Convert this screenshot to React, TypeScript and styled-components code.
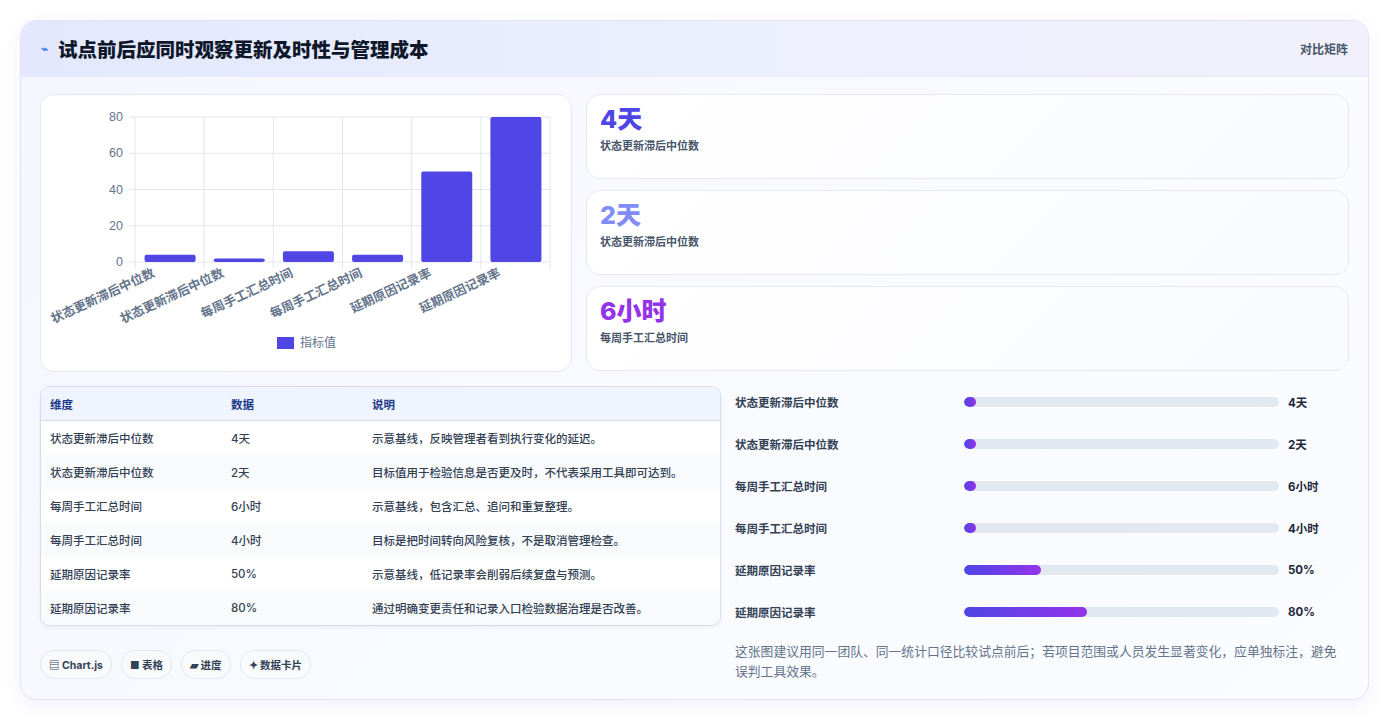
import { FC } from 'react';
import styled, { createGlobalStyle } from 'styled-components';

const GlobalStyle = createGlobalStyle`
    body {
        margin: 0;
        background: #ffffff;
        font-family: 'Inter', 'Noto Sans CJK SC', sans-serif;
    }
`;

const Page = styled.div`
    padding: 20px;
`;

const Panel = styled.section`
    width: 1349px;
    height: 680px;
    box-sizing: border-box;
    border: 1px solid #dfe3f5;
    border-radius: 16px;
    background: linear-gradient(135deg, #f4f6ff 0%, #fafbff 60%, #fbfcff 100%);
    box-shadow: 0 6px 18px rgba(79, 70, 229, 0.08);
    overflow: hidden;
`;

const Header = styled.header`
    height: 55px;
    display: flex;
    align-items: center;
    justify-content: space-between;
    padding: 0 20px;
    background: linear-gradient(90deg, #e3e8fe 0%, #eef0fd 60%, #f1f0fc 100%);
    border-bottom: 1px solid #e6e9f7;
`;

const Title = styled.h1`
    margin: 0;
    display: flex;
    align-items: center;
    gap: 10px;
    font-size: 19.5px;
    font-weight: 800;
    color: #0f172a;
`;

const TitleIcon = styled.span`
    font-size: 12px;
    color: #3b82f6;
`;

const HeaderTag = styled.span`
    font-size: 12px;
    font-weight: 600;
    color: #475569;
`;

const Body = styled.div`
    padding: 17px 19px 0 19px;
    display: flex;
    flex-direction: column;
    gap: 14px;
`;

const TopGrid = styled.div`
    display: grid;
    grid-template-columns: 532px 1fr;
    gap: 14px;
`;

const Card = styled.div`
    background: #ffffff;
    border: 1px solid #e5e8f3;
    border-radius: 14px;
    box-sizing: border-box;
`;

const ChartCard = styled(Card)`
    height: 278px;
`;

const Metrics = styled.div`
    display: flex;
    flex-direction: column;
    gap: 11px;
`;

const MetricCard = styled(Card)`
    height: 85px;
    padding: 8px 13px;
    background: linear-gradient(135deg, #ffffff, #fafbff);
`;

const MetricValue = styled.div<{ $color: string }>`
    font-size: 25px;
    font-weight: 800;
    line-height: 32px;
    color: ${p => p.$color};
`;

const MetricLabel = styled.div`
    font-size: 11px;
    font-weight: 600;
    color: #475569;
    margin-top: 2px;
`;

const BottomGrid = styled.div`
    display: grid;
    grid-template-columns: 681px 1fr;
    gap: 14px;
`;

const LeftCol = styled.div`
    display: flex;
    flex-direction: column;
    gap: 24px;
`;

const TableWrap = styled.div`
    border: 1px solid #d6dcec;
    border-radius: 10px;
    overflow: hidden;
    background: #ffffff;
    box-shadow: 0 2px 4px rgba(15, 23, 42, 0.05);
`;

const Table = styled.table`
    width: 100%;
    table-layout: fixed;
    border-collapse: collapse;
    font-size: 11.5px;
`;

const Th = styled.th<{ $w?: number }>`
    text-align: left;
    font-weight: 700;
    color: #1e3a8a;
    background: #eff4ff;
    height: 33px;
    padding: 0 9px;
    border-bottom: 1px solid #d6dcec;
    width: ${p => (p.$w ? `${p.$w}px` : 'auto')};
`;

const Tr = styled.tr<{ $alt: boolean }>`
    background: ${p => (p.$alt ? '#f8fafc' : '#ffffff')};
    & + & td {
        border-top: 1px solid #e2e8f0;
    }
`;

const Td = styled.td`
    height: 34px;
    padding: 0 9px;
    color: #334155;
    font-weight: 500;
    white-space: nowrap;
`;

const Chips = styled.div`
    display: flex;
    gap: 9px;
`;

const Chip = styled.span`
    height: 27px;
    display: inline-flex;
    align-items: center;
    gap: 3px;
    padding: 0 8px;
    border: 1px solid #e2e8f0;
    border-radius: 14px;
    background: #f8fafc;
    font-size: 10.5px;
    font-weight: 700;
    color: #334155;
`;

const RightCol = styled.div`
    display: flex;
    flex-direction: column;
`;

const ProgressList = styled.div`
    display: flex;
    flex-direction: column;
    padding-top: 6px;
    gap: 22px;
`;

const ProgressRow = styled.div`
    display: grid;
    grid-template-columns: 220px 315px 1fr;
    align-items: center;
    gap: 9px;
    height: 20px;
`;

const ProgressLabel = styled.span`
    font-size: 11.5px;
    font-weight: 700;
    color: #334155;
`;

const Track = styled.div`
    height: 10px;
    border-radius: 5px;
    background: #e2e8f0;
    overflow: hidden;
`;

const Fill = styled.div`
    height: 100%;
    min-width: 12px;
    border-radius: 5px;
    background: linear-gradient(90deg, #4f46e5, #9333ea);
`;

const ProgressValue = styled.span`
    font-size: 11.5px;
    font-weight: 700;
    color: #1e293b;
`;

const Note = styled.p`
    margin: 20px 0 0 0;
    padding-right: 4px;
    font-size: 12.8px;
    line-height: 20px;
    color: #64748b;
`;

const bars = [4, 2, 6, 4, 50, 80];
const labels = ['状态更新滞后中位数', '状态更新滞后中位数', '每周手工汇总时间', '每周手工汇总时间', '延期原因记录率', '延期原因记录率'];

const BarChart: FC = () => {
    const left = 94, right = 509, top = 22, bottom = 167;
    const cw = (right - left) / 6;
    const y = (v: number) => bottom - (v / 80) * (bottom - top);
    return (
        <svg width="531" height="277" viewBox="0 0 531 277" fontFamily="'Liberation Sans', 'Noto Sans CJK SC', sans-serif">
            {[0, 20, 40, 60, 80].map(t => (
                <g key={t}>
                    <line x1={left - 6} x2={right} y1={y(t)} y2={y(t)} stroke="#e2e6ee" />
                    <text x={left - 12} y={y(t) + 4} textAnchor="end" fontSize="12.5" fill="#64748b">{t}</text>
                </g>
            ))}
            {Array.from({ length: 7 }).map((_, i) => (
                <line key={i} x1={left + i * cw} x2={left + i * cw} y1={top} y2={bottom + 7} stroke="#e2e6ee" />
            ))}
            {bars.map((v, i) => {
                const cx = left + cw * i + cw / 2;
                return (
                    <g key={i}>
                        <rect x={cx - 25} y={y(v)} width={51} height={bottom - y(v)} rx={2} fill="#4f46e5" />
                        <text
                            x={cx - 14}
                            y={181}
                            textAnchor="end"
                            fontSize="12.5"
                            fontWeight="600"
                            fill="#64748b"
                            transform={`rotate(-25 ${cx - 14} 181)`}
                        >
                            {labels[i]}
                        </text>
                    </g>
                );
            })}
            <rect x={236} y={242} width={17} height={12} fill="#4f46e5" />
            <text x={259} y={252} fontSize="12" fill="#64748b">指标值</text>
        </svg>
    );
};

const metrics = [
    { value: '4天', label: '状态更新滞后中位数', color: '#4f46e5' },
    { value: '2天', label: '状态更新滞后中位数', color: '#818cf8' },
    { value: '6小时', label: '每周手工汇总时间', color: '#9333ea' },
];

const rows = [
    ['状态更新滞后中位数', '4天', '示意基线，反映管理者看到执行变化的延迟。'],
    ['状态更新滞后中位数', '2天', '目标值用于检验信息是否更及时，不代表采用工具即可达到。'],
    ['每周手工汇总时间', '6小时', '示意基线，包含汇总、追问和重复整理。'],
    ['每周手工汇总时间', '4小时', '目标是把时间转向风险复核，不是取消管理检查。'],
    ['延期原因记录率', '50%', '示意基线，低记录率会削弱后续复盘与预测。'],
    ['延期原因记录率', '80%', '通过明确变更责任和记录入口检验数据治理是否改善。'],
];

const progress = [
    { label: '状态更新滞后中位数', v: 4, text: '4天' },
    { label: '状态更新滞后中位数', v: 2, text: '2天' },
    { label: '每周手工汇总时间', v: 6, text: '6小时' },
    { label: '每周手工汇总时间', v: 4, text: '4小时' },
    { label: '延期原因记录率', v: 50, text: '50%' },
    { label: '延期原因记录率', v: 80, text: '80%' },
];

const App: FC = () => (
    <>
        <GlobalStyle />
        <Page>
            <Panel>
                <Header>
                    <Title>
                        <TitleIcon>⌁</TitleIcon>
                        试点前后应同时观察更新及时性与管理成本
                    </Title>
                    <HeaderTag>对比矩阵</HeaderTag>
                </Header>
                <Body>
                    <TopGrid>
                        <ChartCard>
                            <BarChart />
                        </ChartCard>
                        <Metrics>
                            {metrics.map((m, i) => (
                                <MetricCard key={i}>
                                    <MetricValue $color={m.color}>{m.value}</MetricValue>
                                    <MetricLabel>{m.label}</MetricLabel>
                                </MetricCard>
                            ))}
                        </Metrics>
                    </TopGrid>
                    <BottomGrid>
                        <LeftCol>
                            <TableWrap>
                                <Table>
                                    <thead>
                                        <tr>
                                            <Th $w={163}>维度</Th>
                                            <Th $w={123}>数据</Th>
                                            <Th>说明</Th>
                                        </tr>
                                    </thead>
                                    <tbody>
                                        {rows.map((r, i) => (
                                            <Tr key={i} $alt={i % 2 === 1}>
                                                <Td>{r[0]}</Td>
                                                <Td>{r[1]}</Td>
                                                <Td>{r[2]}</Td>
                                            </Tr>
                                        ))}
                                    </tbody>
                                </Table>
                            </TableWrap>
                            <Chips>
                                <Chip>▤ Chart.js</Chip>
                                <Chip>■ 表格</Chip>
                                <Chip>▰ 进度</Chip>
                                <Chip>✦ 数据卡片</Chip>
                            </Chips>
                        </LeftCol>
                        <RightCol>
                            <ProgressList>
                                {progress.map((p, i) => (
                                    <ProgressRow key={i}>
                                        <ProgressLabel>{p.label}</ProgressLabel>
                                        <Track>
                                            <Fill style={{ width: `${(p.v / 205) * 100}%` }} />
                                        </Track>
                                        <ProgressValue>{p.text}</ProgressValue>
                                    </ProgressRow>
                                ))}
                            </ProgressList>
                            <Note>
                                这张图建议用同一团队、同一统计口径比较试点前后；若项目范围或人员发生显著变化，应单独标注，避免误判工具效果。
                            </Note>
                        </RightCol>
                    </BottomGrid>
                </Body>
            </Panel>
        </Page>
    </>
);

export default App;
